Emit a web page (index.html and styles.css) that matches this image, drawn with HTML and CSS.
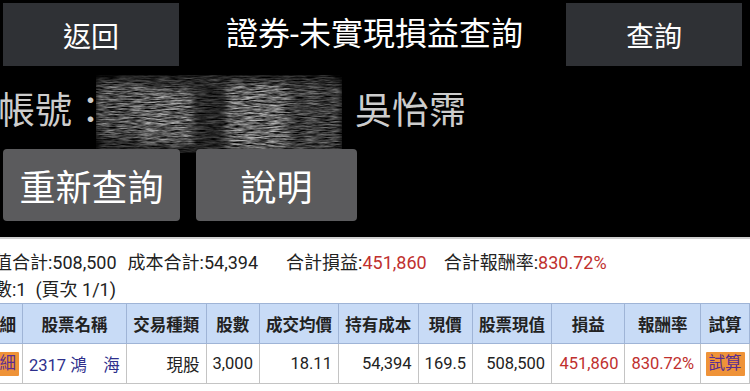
FILE: index.html
```html
<!DOCTYPE html>
<html lang="zh-Hant">
<head>
<meta charset="utf-8">
<title>證券-未實現損益查詢</title>
<link rel="stylesheet" href="styles.css">
</head>
<body>
<div class="dark">
  <div class="topbar">
    <div class="btn btn-top btn-back">返回</div>
    <div class="title">證券-未實現損益查詢</div>
    <div class="btn btn-top btn-query">查詢</div>
  </div>
  <div class="account">
    <span class="acc-label">帳號：</span>
    <svg class="scribble" width="258" height="88" viewBox="0 0 258 88" aria-hidden="true">
      <defs>
        <filter id="noise" x="0" y="0" width="100%" height="100%">
          <feGaussianBlur in="SourceGraphic" stdDeviation="3" result="b"/>
          <feTurbulence type="fractalNoise" baseFrequency="0.08 0.7" numOctaves="3" seed="7" result="t"/>
          <feColorMatrix in="t" type="matrix" values="0 0 0 0 1  0 0 0 0 1  0 0 0 0 1  1.8 0 0 0 -0.35" result="m"/>
          <feComposite in="b" in2="m" operator="in"/>
        </filter>
      </defs>
      <g filter="url(#noise)">
        <rect x="4" y="10" width="244" height="74" fill="#444"/>
        <rect x="2" y="12" width="48" height="56" fill="#8c8c8c"/>
        <rect x="46" y="20" width="52" height="54" fill="#a8a8a8"/>
        <rect x="134" y="16" width="60" height="64" fill="#b4b4b4"/>
        <rect x="192" y="18" width="54" height="62" fill="#707070"/>
        <rect x="24" y="6" width="216" height="10" fill="#555"/>
      </g>
    </svg>
    <span class="acc-name">吳怡霈</span>
  </div>
  <div class="actions">
    <div class="btn btn-act btn-requery">重新查詢</div>
    <div class="btn btn-act btn-help">說明</div>
  </div>
</div>
<div class="light">
  <div class="summary">
    <span class="sum-item sum-1">值合計:508,500</span><span class="sum-item sum-2">成本合計:54,394</span><span class="sum-item sum-3">合計損益:<span class="red">451,860</span></span><span class="sum-item">合計報酬率:<span class="red">830.72%</span></span>
  </div>
  <div class="pages">數:1&nbsp;&nbsp;(頁次 1/1)</div>
  <table class="grid">
    <colgroup>
      <col class="c0"><col class="c1"><col class="c2"><col class="c3"><col class="c4"><col class="c5"><col class="c6"><col class="c7"><col class="c8"><col class="c9"><col class="c10">
    </colgroup>
    <thead>
      <tr>
        <th>明細</th><th>股票名稱</th><th>交易種類</th><th>股數</th><th>成交均價</th><th>持有成本</th><th>現價</th><th>股票現值</th><th>損益</th><th>報酬率</th><th>試算</th>
      </tr>
    </thead>
    <tbody>
      <tr>
        <td class="center"><span class="tag">明細</span></td>
        <td class="name">2317 鴻　海</td>
        <td class="num">現股</td>
        <td class="num">3,000</td>
        <td class="num">18.11</td>
        <td class="num">54,394</td>
        <td class="num">169.5</td>
        <td class="num">508,500</td>
        <td class="num red">451,860</td>
        <td class="num red">830.72%</td>
        <td class="center"><span class="tag">試算</span></td>
      </tr>
    </tbody>
  </table>
</div>
</body>
</html>
```
FILE: styles.css
```css
* { box-sizing: border-box; }
html, body { margin: 0; padding: 0; }
body {
  width: 750px;
  height: 391px;
  overflow: hidden;
  background: #fff;
  font-family: Roboto, "Noto Sans CJK TC", sans-serif;
}
.dark {
  background: #000;
  height: 239px;
  border-bottom: 2px solid #cfcfcf;
  overflow: hidden;
}
.topbar {
  display: flex;
  align-items: flex-start;
  justify-content: space-between;
  padding: 3px 8px 0 3px;
  height: 66px;
}
.btn {
  display: flex;
  align-items: center;
  justify-content: center;
  color: #fff;
}
.btn-top {
  background: #2f3135;
  height: 63px;
  font-size: 28px;
}
.btn-back { width: 176px; }
.btn-query { width: 176px; }
.title {
  color: #fff;
  font-size: 32px;
  line-height: 63px;
  height: 63px;
  padding-left: 4px;
}
.account {
  display: flex;
  align-items: center;
  height: 83px;
  color: #cdcdcd;
  font-size: 37px;
  white-space: nowrap;
}
.acc-label { width: 108px; flex: none; margin-left: -2px; white-space: nowrap; }
.scribble { flex: none; margin-left: -12px; margin-top: 10px; }
.acc-name { margin-left: 3px; }
.actions {
  display: flex;
  gap: 16px;
  padding-left: 3px;
}
.btn-act {
  background: #5b5b5d;
  border-radius: 4px;
  height: 72px;
  font-size: 36px;
}
.btn-requery { width: 177px; }
.btn-help { width: 161px; }
.light {
  padding-top: 10px;
  color: #222;
}
.summary, .pages {
  font-size: 18px;
  line-height: 27px;
  white-space: nowrap;
  margin-left: -6px;
}
.sum-1 { margin-right: 11px; }
.sum-2 { margin-right: 28px; }
.sum-3 { margin-right: 17px; }
.red { color: #c0302e; }
.grid {
  border-collapse: collapse;
  table-layout: fixed;
  margin-left: -24px;
  font-size: 16.5px;
}
.grid th, .grid td {
  height: 40px;
  padding: 0 6px;
  white-space: nowrap;
  overflow: hidden;
}
.grid th {
  background: #c8dbf6;
  border: 1px solid #9fb4d6;
  font-weight: bold;
  text-align: center;
  color: #222;
}
.grid td {
  border: 1px solid #c4c4c4;
  color: #222;
}
.grid td.red { color: #c0302e; }
.c0 { width: 46px; }
.c1 { width: 104px; }
.c2 { width: 80px; }
.c3 { width: 52px; }
.c4 { width: 79px; }
.c5 { width: 80px; }
.c6 { width: 54px; }
.c7 { width: 77px; }
.c8 { width: 74px; }
.c9 { width: 75px; }
.c10 { width: 50px; }
.num { text-align: right; }
.center { text-align: center; }
.grid td.center { padding: 0; }
.name { color: #2e2f8c; text-align: left; }
.grid td.name { color: #2e2f8c; }
.tag {
  display: inline-block;
  background: #ef9338;
  color: #5a2d91;
  padding: 1px 3px;
  line-height: 22px;
  border-radius: 1px;
}
```
